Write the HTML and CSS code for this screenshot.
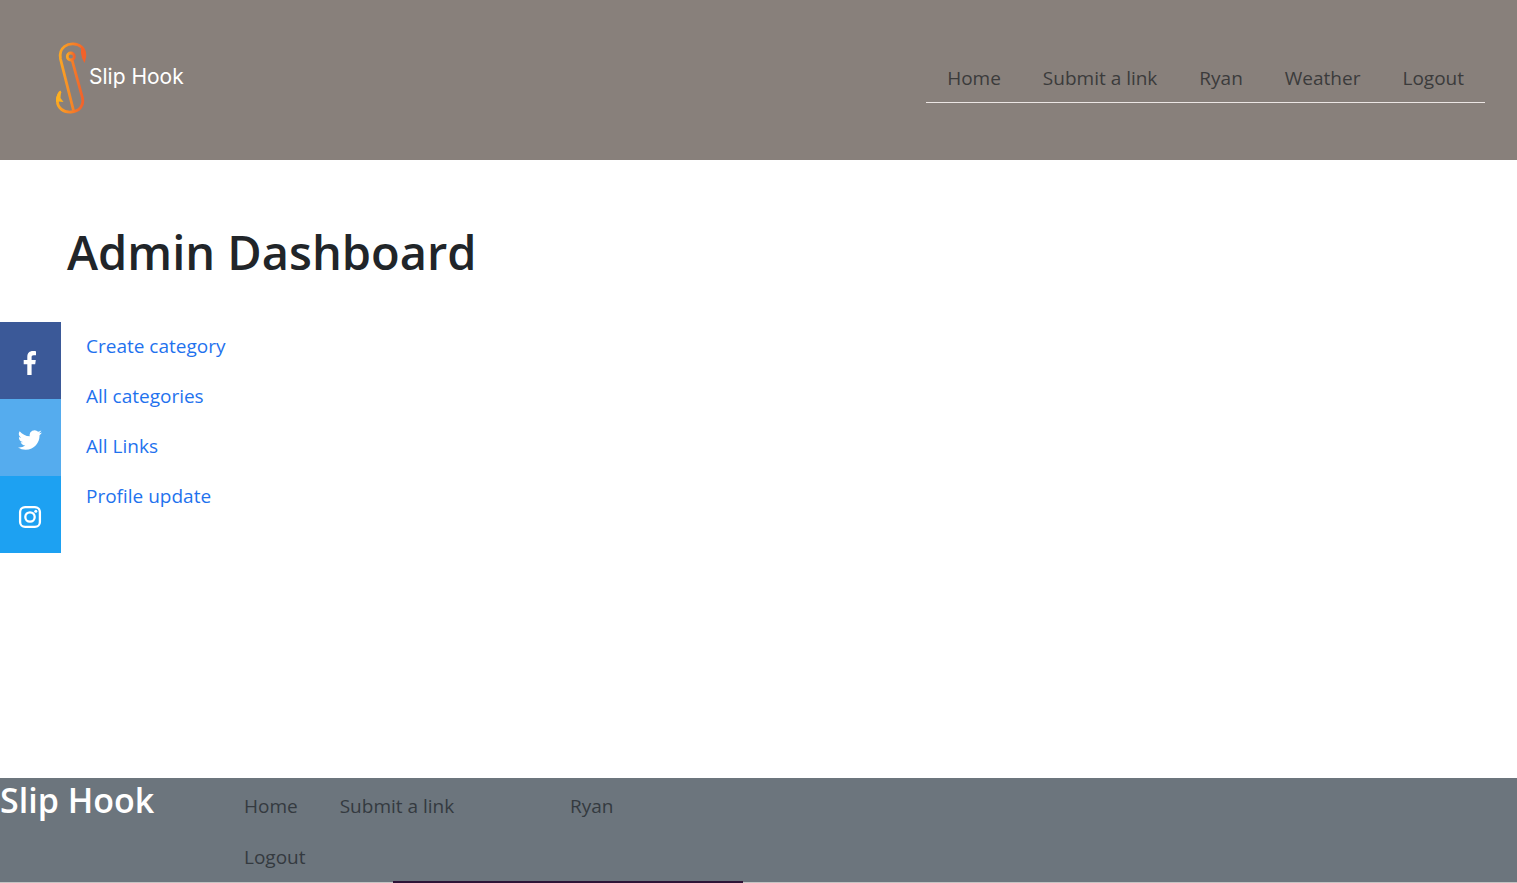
FILE: index.html
```
<!DOCTYPE html>
<html lang="en">
<head>
<meta charset="utf-8">
<meta name="viewport" content="width=device-width, initial-scale=1">
<title>Slip Hook - Admin Dashboard</title>
<link rel="stylesheet" href="styles.css">
</head>
<body>
<header class="site-header">
  <a class="logo" href="#">
    <svg class="logo-mark" viewBox="0 0 34 74" fill="none" aria-hidden="true">
      <defs>
        <linearGradient id="hook" x1="0" y1="0" x2="1" y2="0">
          <stop offset="0" stop-color="#fba623"/>
          <stop offset="1" stop-color="#f2622a"/>
        </linearGradient>
      </defs>
      <g stroke="url(#hook)" stroke-width="2.8">
        <path d="M29.500 17C30.500 12 30 9 26.500 6C22 2 14 2 9.500 5.500C5 9 4.500 13 5.500 18L18.500 69.500"/>
        <circle cx="15.800" cy="15.500" r="3.500"/>
        <path d="M17.200 19.500L27.500 57C29 65 24 70.500 16 71C8 71.500 2.400 66.500 2.400 60C2.400 56 3.500 53 5.500 50.500"/>
      </g>
      <path fill="#fdb01f" d="M6 49.500L5.500 57L8.500 61L3 60.500L1.200 61C.5 57 2 52 6 49.500Z"/>
      <path fill="#f2622a" d="M26 5.500C31 8.500 32.500 14 29.500 22L27 17L26 12Z"/>
    </svg>
    <span class="logo-text">Slip Hook</span>
  </a>
  <nav class="top-nav" aria-label="Main">
    <a class="nav-link" href="#">Home</a>
    <a class="nav-link" href="#">Submit a link</a>
    <a class="nav-link" href="#">Ryan</a>
    <a class="nav-link" href="#">Weather</a>
    <a class="nav-link" href="#">Logout</a>
  </nav>
</header>

<main class="content">
  <h1 class="page-title">Admin Dashboard</h1>
  <div class="panel">
    <aside class="social" aria-label="Social media">
      <a class="social-link facebook" href="#" aria-label="Facebook">
        <svg class="social-icon" viewBox="0 0 24 24" fill="#fff"><path d="M9.300 24V13.200H5.700V9H9.300V5.900C9.300 2.100 11.500 0 14.900 0C16.400 0 17.700.2 18 .3V4.200H15.700C13.900 4.200 13.600 5 13.600 6.200V9H17.800L17.200 13.200H13.600V24Z"/></svg>
      </a>
      <a class="social-link twitter" href="#" aria-label="Twitter">
        <svg class="social-icon" viewBox="0 0 24 24" fill="#fff"><path d="M23.950 4.570a10 10 0 0 1-2.820.77 4.960 4.960 0 0 0 2.160-2.720c-.95.550-2.010.950-3.130 1.180a4.920 4.920 0 0 0-8.380 4.480C7.690 8.090 4.070 6.130 1.640 3.160a4.920 4.920 0 0 0 1.520 6.570 4.900 4.900 0 0 1-2.230-.61v.06a4.920 4.920 0 0 0 3.950 4.830 4.900 4.900 0 0 1-2.210.08 4.940 4.940 0 0 0 4.600 3.420A9.870 9.870 0 0 1 0 19.540a13.990 13.990 0 0 0 7.550 2.210c9.050 0 14-7.500 14-13.980 0-.21 0-.42-.02-.63a9.940 9.940 0 0 0 2.420-2.570z"/></svg>
      </a>
      <a class="social-link instagram" href="#" aria-label="Instagram">
        <svg class="social-icon" viewBox="0 0 24 24" fill="none" stroke="#fff" stroke-width="2.300"><rect x="2.100" y="2.100" width="19.800" height="19.800" rx="5"/><circle cx="12" cy="12" r="4.700"/><circle cx="17.800" cy="6.200" r="1.500" fill="#fff" stroke="none"/></svg>
      </a>
    </aside>
    <ul class="admin-links">
      <li><a class="admin-link" href="#">Create category</a></li>
      <li><a class="admin-link" href="#">All categories</a></li>
      <li><a class="admin-link" href="#">All Links</a></li>
      <li><a class="admin-link" href="#">Profile update</a></li>
    </ul>
  </div>
</main>

<footer class="site-footer">
  <div class="footer-body">
    <h2 class="footer-title">Slip Hook</h2>
    <nav class="footer-nav" aria-label="Footer">
      <div class="footer-column">
        <a class="footer-link" href="#">Home</a>
        <a class="footer-link" href="#">Submit a link</a>
        <a class="footer-link" href="#">Logout</a>
      </div>
      <div class="footer-column">
        <a class="footer-link" href="#">Ryan</a>
      </div>
    </nav>
  </div>
  <div class="footer-strip"><div class="footer-accent"></div></div>
</footer>
</body>
</html>
```
FILE: styles.css
```
* { box-sizing: border-box; }

body {
  display: flex;
  flex-direction: column;
  min-height: 100vh;
  margin: 0;
  background: #fff;
  color: #212529;
  font: 400 19px/30px "Open Sans", "Noto Sans", sans-serif;
}

a { text-decoration: none; }

.site-header {
  display: flex;
  align-items: center;
  justify-content: space-between;
  min-height: 160px;
  padding: 0 32px 4px 55px;
  background: #88807b;
}

.logo {
  display: flex;
  align-items: center;
  color: #fff;
}

.logo-mark {
  width: 34px;
  height: 74px;
}

.logo-text {
  padding-bottom: 2px;
  font: 400 21px/24px Inter, sans-serif;
}

.top-nav {
  display: flex;
  border-bottom: 1px solid #ece6e4;
}

.nav-link {
  padding: 9px 21px;
  color: #3b3b3b;
}

.content {
  flex: 1;
  padding-top: 60px;
}

.page-title {
  margin: 0 0 38px;
  padding-left: 67px;
  font-size: 47px;
  font-weight: 600;
  line-height: 64px;
}

.panel { display: flex; }

.social {
  display: flex;
  flex-direction: column;
  width: 61px;
}

.social-link {
  display: flex;
  align-items: center;
  justify-content: center;
  height: 77px;
  padding-top: 4px;
  padding-right: 2px;
}

.facebook { background: #3b5998; }
.twitter { background: #55acee; }
.instagram { background: #1da1f2; }

.social-icon {
  width: 24px;
  height: 24px;
}

.admin-links {
  display: flex;
  flex-direction: column;
  gap: 20px;
  margin: 0;
  padding: 9px 0 0 25px;
  list-style: none;
}

.admin-link { color: #1f72ee; }

.footer-body {
  display: flex;
  background: #6c757d;
}

.footer-title {
  flex: none;
  width: 223px;
  margin: 0;
  color: #fff;
  font-size: 34px;
  font-weight: 600;
  line-height: 44px;
}

.footer-nav {
  display: flex;
  padding-top: 3px;
}

.footer-column {
  display: flex;
  flex-wrap: wrap;
  align-content: flex-start;
  row-gap: 1px;
  width: 326px;
}

.footer-link {
  padding: 10px 21px;
  color: #343a40;
}

.footer-strip {
  height: 1px;
  background: #c4c3c3;
}

.footer-accent {
  position: relative;
  top: -1px;
  width: 350px;
  height: 2px;
  margin-left: 393px;
  background: #2e1437;
}
```
